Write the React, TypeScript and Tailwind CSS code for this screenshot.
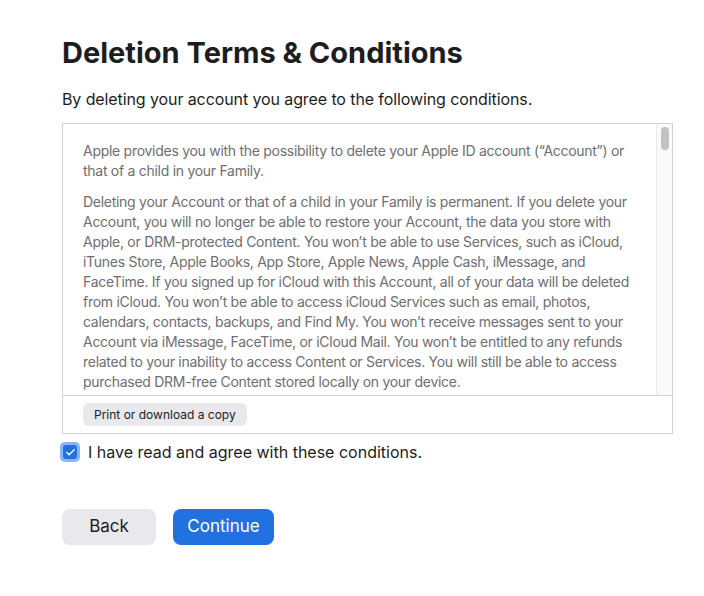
import { Check } from "lucide-react";

const paragraphs = [
  "Apple provides you with the possibility to delete your Apple ID account (\u201CAccount\u201D) or that of a child in your Family.",
  "Deleting your Account or that of a child in your Family is permanent. If you delete your Account, you will no longer be able to restore your Account, the data you store with Apple, or DRM-protected Content. You won\u2019t be able to use Services, such as iCloud, iTunes Store, Apple Books, App Store, Apple News, Apple Cash, iMessage, and FaceTime. If you signed up for iCloud with this Account, all of your data will be deleted from iCloud. You won\u2019t be able to access iCloud Services such as email, photos, calendars, contacts, backups, and Find My. You won\u2019t receive messages sent to your Account via iMessage, FaceTime, or iCloud Mail. You won\u2019t be entitled to any refunds related to your inability to access Content or Services. You will still be able to access purchased DRM-free Content stored locally on your device.",
];

export default function App() {
  return (
    <div className="min-h-screen bg-white px-[62px] pt-[36px] text-[#1d1d1f] font-['Inter','Liberation_Sans',sans-serif]">
      <h1 className="text-[29px] font-bold leading-[34px]">Deletion Terms &amp; Conditions</h1>
      <p className="mt-[17px] text-[16px] leading-[24px] tracking-[-0.1px]">By deleting your account you agree to the following conditions.</p>

      {/* Terms box */}
      <div className="mt-[12px] w-[611px] border border-[#d2d2d7]">
        <div className="relative h-[271px] overflow-hidden">
          <div className="pl-[20px] pr-[36px] pt-[17px] text-[14px] leading-[20px] tracking-[-0.28px] text-[#6e6e73]">
            {paragraphs.map((p, i) => (
              <p key={i} className="mb-[11px]">{p}</p>
            ))}
          </div>
          {/* scrollbar */}
          <div className="absolute right-0 top-0 h-full w-[16px] border-l border-[#ebebeb] bg-[#fafafa]">
            <div className="mx-auto mt-[3px] h-[23px] w-[8px] rounded-full bg-[#c2c2c2]" />
          </div>
        </div>
        <div className="border-t border-[#d2d2d7] px-[20px] py-[7px]">
          <button className="block h-[23px] rounded-[6px] bg-[#e8e8ed] px-[11px] text-[12px] leading-[23px] text-[#1d1d1f]">
            Print or download a copy
          </button>
        </div>
      </div>

      {/* Agreement */}
      <label className="mt-[6px] -ml-[2px] flex items-center gap-[8px]">
        <span className="flex h-[20px] w-[20px] items-center justify-center rounded-[5px] bg-[#8ab4f5]">
          <span className="flex h-[14px] w-[14px] items-center justify-center rounded-[3px] bg-[#2271e1]">
            <Check className="h-[11px] w-[11px] text-white" strokeWidth={3} />
          </span>
        </span>
        <span className="text-[16px] leading-[24px]">I have read and agree with these conditions.</span>
      </label>

      {/* Actions */}
      <div className="mt-[45px] flex gap-[17px]">
        <button className="h-[36px] w-[94px] rounded-[8px] bg-[#e8e8ed] text-[17px] text-[#1d1d1f]">Back</button>
        <button className="h-[36px] w-[101px] rounded-[8px] bg-[#2271e1] text-[17px] text-white">Continue</button>
      </div>
    </div>
  );
}
